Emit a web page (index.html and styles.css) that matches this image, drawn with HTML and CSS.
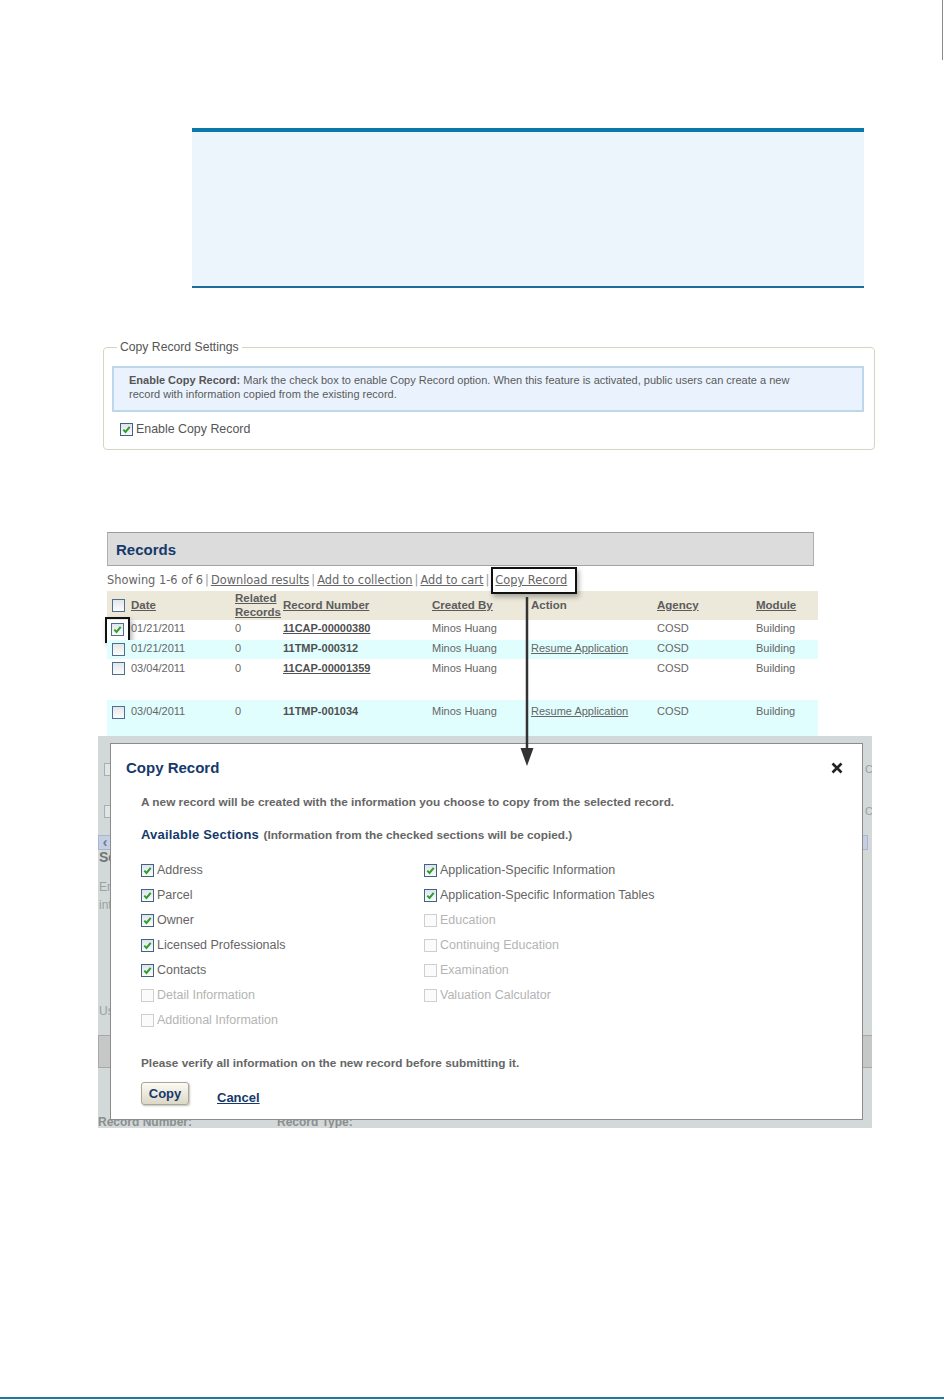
FILE: index.html
```html
<!DOCTYPE html>
<html>
<head>
<meta charset="utf-8">
<title>Copy Record</title>
<link rel="stylesheet" href="styles.css">
</head>
<body>
<div class="page">
  <div class="page-mark"><span class="page-mark-line"></span></div>
  <div class="note-box"></div>

  <fieldset class="settings">
    <legend>Copy Record Settings</legend>
    <div class="settings-info"><b>Enable Copy Record:</b> Mark the check box to enable Copy Record option. When this feature is activated, public users can create a new<br>record with information copied from the existing record.</div>
    <label class="settings-check"><span class="cb cb-on"><svg viewBox="0 0 11 11" width="11" height="11"><path d="M2.3 5.6 L4.5 7.9 L8.7 2.8" fill="none" stroke="#2f9e2f" stroke-width="2"/></svg></span>Enable Copy Record</label>
  </fieldset>

  <div class="figure">
    <div class="records-area">
      <div class="records-bar">Records</div>
      <div class="records-tools">Showing 1-6 of 6<span class="sep">|</span><a>Download results</a><span class="sep">|</span><a>Add to collection</a><span class="sep">|</span><a>Add to cart</a><span class="sep">|</span><span class="callout"><a>Copy Record</a></span></div>
      <table class="records">
        <colgroup>
          <col class="c-cb"><col class="c-date"><col class="c-rel"><col class="c-num"><col class="c-by"><col class="c-act"><col class="c-ag"><col class="c-mod">
        </colgroup>
        <thead>
          <tr>
            <th><span class="cb cb-tbl"></span></th>
            <th><a>Date</a></th>
            <th class="th-rel"><a>Related<br>Records</a></th>
            <th><a>Record Number</a></th>
            <th><a>Created By</a></th>
            <th>Action</th>
            <th><a>Agency</a></th>
            <th><a>Module</a></th>
          </tr>
        </thead>
        <tbody>
          <tr class="r1">
            <td class="td-cb"><span class="cb-hl"><span class="cb cb-tbl cb-on"><svg viewBox="0 0 11 11" width="11" height="11"><path d="M2.3 5.6 L4.5 7.9 L8.7 2.8" fill="none" stroke="#2f9e2f" stroke-width="2"/></svg></span></span></td>
            <td>01/21/2011</td><td>0</td><td class="num"><a>11CAP-00000380</a></td><td>Minos Huang</td><td></td><td>COSD</td><td>Building</td>
          </tr>
          <tr class="r2 alt">
            <td class="td-cb"><span class="cb cb-tbl"></span></td>
            <td>01/21/2011</td><td>0</td><td class="num">11TMP-000312</td><td>Minos Huang</td><td><a>Resume Application</a></td><td>COSD</td><td>Building</td>
          </tr>
          <tr class="r3">
            <td class="td-cb"><span class="cb cb-tbl"></span></td>
            <td>03/04/2011</td><td>0</td><td class="num"><a>11CAP-00001359</a></td><td>Minos Huang</td><td></td><td>COSD</td><td>Building</td>
          </tr>
          <tr class="r4 alt">
            <td class="td-cb"><span class="cb cb-tbl"></span></td>
            <td>03/04/2011</td><td>0</td><td class="num">11TMP-001034</td><td>Minos Huang</td><td><a>Resume Application</a></td><td>COSD</td><td>Building</td>
          </tr>
        </tbody>
      </table>
    </div>

    <svg class="arrow" viewBox="0 0 16 170" width="16" height="170">
      <line x1="8" y1="0" x2="8" y2="154" stroke="#333" stroke-width="2.5"/>
      <polygon points="1.5,151 14.5,151 8,169" fill="#333"/>
    </svg>

    <div class="backdrop">
      <div class="bg-page">
        <div class="bg-line bg-line-1"><span class="bg-cb"></span><span class="bg-right">C</span></div>
        <div class="bg-line bg-line-2"><span class="bg-cb"></span><span class="bg-right">C</span></div>
        <div class="bg-pager"><span class="bg-pg">&lsaquo;</span><span class="bg-pg bg-pg-r"></span></div>
        <div class="bg-heading">Se</div>
        <div class="bg-text">Enter<br>into</div>
        <div class="bg-us">Use</div>
        <div class="bg-buttons"><span class="bg-btn">C</span><span class="bg-btn bg-btn-r"></span></div>
        <div class="bg-record"><span class="bg-rec-num">Record Number:</span><span>Record Type:</span></div>
      </div>

      <div class="dialog">
        <div class="dlg-head">
          <span class="dlg-title">Copy Record</span>
          <svg class="dlg-close" viewBox="0 0 12 12" width="12" height="12"><path d="M1.5 1.5 L10.5 10.5 M10.5 1.5 L1.5 10.5" stroke="#222" stroke-width="2.6" fill="none"/></svg>
        </div>
        <div class="dlg-body">
          <div class="dlg-intro">A new record will be created with the information you choose to copy from the selected record.</div>
          <div class="dlg-avail"><span class="dlg-avail-title">Available Sections</span> <span class="dlg-avail-note">(Information from the checked sections will be copied.)</span></div>
          <div class="dlg-grid">
            <label class="opt"><span class="cb cb-on"><svg viewBox="0 0 11 11" width="11" height="11"><path d="M2.3 5.6 L4.5 7.9 L8.7 2.8" fill="none" stroke="#2f9e2f" stroke-width="2"/></svg></span>Address</label>
            <label class="opt"><span class="cb cb-on"><svg viewBox="0 0 11 11" width="11" height="11"><path d="M2.3 5.6 L4.5 7.9 L8.7 2.8" fill="none" stroke="#2f9e2f" stroke-width="2"/></svg></span>Parcel</label>
            <label class="opt"><span class="cb cb-on"><svg viewBox="0 0 11 11" width="11" height="11"><path d="M2.3 5.6 L4.5 7.9 L8.7 2.8" fill="none" stroke="#2f9e2f" stroke-width="2"/></svg></span>Owner</label>
            <label class="opt"><span class="cb cb-on"><svg viewBox="0 0 11 11" width="11" height="11"><path d="M2.3 5.6 L4.5 7.9 L8.7 2.8" fill="none" stroke="#2f9e2f" stroke-width="2"/></svg></span>Licensed Professionals</label>
            <label class="opt"><span class="cb cb-on"><svg viewBox="0 0 11 11" width="11" height="11"><path d="M2.3 5.6 L4.5 7.9 L8.7 2.8" fill="none" stroke="#2f9e2f" stroke-width="2"/></svg></span>Contacts</label>
            <label class="opt dis"><span class="cb cb-dis"></span>Detail Information</label>
            <label class="opt dis"><span class="cb cb-dis"></span>Additional Information</label>
            <label class="opt"><span class="cb cb-on"><svg viewBox="0 0 11 11" width="11" height="11"><path d="M2.3 5.6 L4.5 7.9 L8.7 2.8" fill="none" stroke="#2f9e2f" stroke-width="2"/></svg></span>Application-Specific Information</label>
            <label class="opt"><span class="cb cb-on"><svg viewBox="0 0 11 11" width="11" height="11"><path d="M2.3 5.6 L4.5 7.9 L8.7 2.8" fill="none" stroke="#2f9e2f" stroke-width="2"/></svg></span>Application-Specific Information Tables</label>
            <label class="opt dis"><span class="cb cb-dis"></span>Education</label>
            <label class="opt dis"><span class="cb cb-dis"></span>Continuing Education</label>
            <label class="opt dis"><span class="cb cb-dis"></span>Examination</label>
            <label class="opt dis"><span class="cb cb-dis"></span>Valuation Calculator</label>
          </div>
          <div class="dlg-verify">Please verify all information on the new record before submitting it.</div>
          <div class="dlg-actions">
            <span class="btn-copy">Copy</span>
            <a class="link-cancel">Cancel</a>
          </div>
        </div>
      </div>
    </div>
  </div>

  <div class="page-foot"></div>
</div>
</body>
</html>
```

FILE: styles.css
```css
* { box-sizing: border-box; }
html, body { margin: 0; padding: 0; background: #fff; }
body { font-family: "Liberation Sans", Arial, sans-serif; color: #666; }

.page { width: 944px; }

/* page marker at top right */
.page-mark { height: 60px; display: flex; justify-content: flex-end; }
.page-mark-line { width: 1px; height: 60px; background: #8a8a8a; margin-right: 1px; }

/* empty note box */
.note-box {
  margin: 68px 0 0 192px;
  width: 672px;
  height: 160px;
  background: #edf5fc;
  border-top: 4px solid #0a79a8;
  border-bottom: 2px solid #1c6d9b;
}

/* Copy Record Settings */
.settings {
  margin: 52px 0 0 103px;
  width: 772px;
  min-width: 0;
  border: 1px solid #d5d5c4;
  border-radius: 4px;
  padding: 0 10px 12px 8px;
}
.settings legend {
  font-size: 12.2px;
  line-height: 15px;
  color: #555;
  padding: 0 3px;
  margin-left: 5px;
}
.settings-info {
  margin-top: 11px;
  border: 2px solid #bdd7ed;
  background: #eaf3fd;
  padding: 5px 15px 9px;
  font-size: 11px;
  line-height: 14px;
  color: #5a5a5a;
}
.settings-info b { color: #555; }
.settings-check {
  display: flex;
  align-items: center;
  gap: 3px;
  margin: 9px 0 0 8px;
  font-size: 12.4px;
  line-height: 16px;
  color: #555;
}

/* checkbox */
.cb {
  display: inline-block;
  flex: none;
  width: 13px;
  height: 13px;
  border: 1px solid #3f6286;
  background: linear-gradient(#dfe4ea, #fbfbfb);
  vertical-align: top;
}
.cb svg { display: block; }
.cb-tbl { border-color: #4f6f90; background: linear-gradient(#e3e6ea, #fcfcfc); }
.cb-dis { border-color: #cfcfcf; background: #fbfbfb; }

/* Records figure */
.figure {
  position: relative;
  margin: 70px 0 0 98px;
  width: 774px;
}
.records-area { background: #fff; padding: 12px 0 0 9px; }
.records-bar {
  width: 707px;
  height: 34px;
  background: #dcdcdc;
  border: 1px solid #b0b0b0;
  border-top-color: #9c9c9c;
  border-bottom-color: #a4a4a4;
  display: flex;
  align-items: center;
  padding-left: 8px;
  font-weight: bold;
  font-size: 15px;
  color: #16396b;
}
.records-tools {
  margin-top: 7px;
  height: 14px;
  line-height: 14px;
  font-family: "DejaVu Sans", Verdana, sans-serif;
  font-size: 11.4px;
  color: #666;
  white-space: nowrap;
}
.records-tools a { color: #666; text-decoration: underline; }
.sep { margin: 0 2px; color: #999; }
.callout {
  display: inline-block;
  vertical-align: middle;
  line-height: 13px;
  border: 2px solid #111;
  padding: 5px 8px 5px 2px;
  margin: -7px 0;
  box-shadow: 2px 3px 5px rgba(0, 0, 0, 0.3);
  background: #fff;
}

.records {
  margin-top: 4px;
  width: 711px;
  border-collapse: collapse;
  table-layout: fixed;
  font-size: 11px;
  color: #666;
}
.c-cb { width: 24px; }
.c-date { width: 104px; }
.c-rel { width: 48px; }
.c-num { width: 149px; }
.c-by { width: 99px; }
.c-act { width: 126px; }
.c-ag { width: 99px; }
.c-mod { width: 62px; }

.records thead tr { height: 29px; background: #ece8da; }
.records th {
  padding: 0 0 1px;
  text-align: left;
  vertical-align: middle;
  font-weight: bold;
  font-size: 11.5px;
  line-height: 14px;
  color: #5c5c5c;
  white-space: nowrap;
}
.records th a { text-decoration: underline; color: #5c5c5c; }
.records th .cb { margin-left: 5px; display: block; }

.records td {
  padding: 2px 0 0;
  vertical-align: top;
  line-height: 13px;
  white-space: nowrap;
}
.records td a { color: #666; text-decoration: underline; }
.records td.td-cb { padding-top: 3px; }
.records td.td-cb > .cb { display: block; margin-left: 5px; }
.records td.num { font-weight: bold; color: #505050; }
.records td.num a { color: #505050; }
.records .r1 { height: 20px; }
.records .r2 { height: 19px; }
.records .r3 { height: 41px; }
.records .r3 td { padding-top: 3px; }
.records .r4 { height: 36px; }
.records .r4 td { padding-top: 5px; }
.records .r4 td.td-cb { padding-top: 6px; }
.records .alt { background: #e1fefe; }

.cb-hl {
  display: block;
  width: 25px;
  height: 26px;
  margin: -6px 0 -7px -2px;
  border: 2px solid #111;
  padding: 4px;
  box-shadow: 2px 3px 5px rgba(0, 0, 0, 0.3);
  background: transparent;
}

.arrow {
  position: absolute;
  left: 421px;
  top: 77px;
  z-index: 3;
  display: block;
}

/* modal backdrop with underlying page */
.backdrop {
  position: relative;
  height: 392px;
  background: #d3d8d8;
  overflow: hidden;
}
.bg-page { padding-left: 6px; font-size: 12px; color: #8e9494; }
.bg-line { display: flex; align-items: center; height: 14px; }
.bg-line-1 { margin-top: 26px; }
.bg-line-2 { margin-top: 28px; }
.bg-cb { width: 13px; height: 13px; border: 1px solid #a6afb6; background: #e2e5e5; }
.bg-right { margin-left: auto; margin-right: -4px; width: 11px; font-size: 11px; color: #9aa0a0; }
.bg-pager { display: flex; height: 15px; margin: 17px 0 0 -6px; }
.bg-pg {
  width: 14px; height: 15px;
  border: 1px solid #a9b6cf;
  background: #c5cfe2;
  color: #6c7a94;
  font-size: 14px; line-height: 12px; text-align: center; font-weight: bold;
}
.bg-pg-r { margin-left: auto; margin-right: 4px; width: 8px; }
.bg-heading { margin-left: -5px; font-weight: bold; font-size: 14px; line-height: 14px; color: #6f7676; }
.bg-text { margin: 14px 0 0 -5px; line-height: 18px; color: #9ba1a1; }
.bg-us { margin: 90px 0 0 -5px; line-height: 14px; color: #9ba1a1; }
.bg-buttons { display: flex; height: 33px; margin: 17px 0 0 -6px; }
.bg-btn {
  width: 100px; height: 33px;
  border: 1px solid #a8a8a8;
  background: #c6c8c8;
  color: #777; font-weight: bold; text-align: center; line-height: 31px;
}
.bg-btn-r { margin-left: auto; margin-right: -2px; width: 12px; }
.bg-record { display: flex; margin: 47px 0 0 -6px; font-weight: bold; font-size: 12px; line-height: 14px; color: #8a8f8f; }
.bg-rec-num { width: 179px; }

/* dialog */
.dialog {
  position: absolute;
  left: 12px;
  top: 7px;
  z-index: 2;
  width: 753px;
  height: 377px;
  background: #fff;
  border: 1px solid #8c8c8c;
}
.dlg-head {
  display: flex;
  justify-content: space-between;
  align-items: center;
  height: 34px;
  padding: 14px 19px 0 15px;
}
.dlg-title { font-weight: bold; font-size: 15px; line-height: 20px; color: #16396b; }
.dlg-close { display: block; }
.dlg-body { padding-left: 30px; }
.dlg-intro { margin-top: 17px; font-weight: bold; font-size: 11.8px; line-height: 14px; color: #666; }
.dlg-avail { margin-top: 17px; line-height: 16px; }
.dlg-avail-title { font-weight: bold; font-size: 13px; color: #16396b; letter-spacing: 0.2px; }
.dlg-avail-note { font-weight: bold; font-size: 11.8px; color: #666; }
.dlg-grid {
  margin-top: 15px;
  display: grid;
  grid-template-columns: 283px 1fr;
  grid-template-rows: repeat(7, 25px);
  grid-auto-flow: column;
}
.opt { display: flex; align-items: center; gap: 3px; font-size: 12.5px; line-height: 15px; color: #666; }
.opt.dis { color: #b4b4b4; }
.dlg-verify { margin-top: 23px; font-weight: bold; font-size: 11.8px; line-height: 14px; color: #666; }
.dlg-actions { margin-top: 12px; display: flex; align-items: flex-end; gap: 28px; }
.btn-copy {
  width: 48px;
  height: 23px;
  display: flex;
  align-items: center;
  justify-content: center;
  border: 1px solid #aaa796;
  border-radius: 3px;
  background: linear-gradient(#fcfbf4, #dcd8c6);
  box-shadow: 1px 1px 2px rgba(0, 0, 0, 0.25);
  font-weight: bold;
  font-size: 13px;
  color: #16396b;
}
.link-cancel { font-weight: bold; font-size: 13px; line-height: 15px; color: #16396b; text-decoration: underline; }

/* footer rule */
.page-foot { margin-top: 269px; height: 2px; background: #1c7aa2; }
```
